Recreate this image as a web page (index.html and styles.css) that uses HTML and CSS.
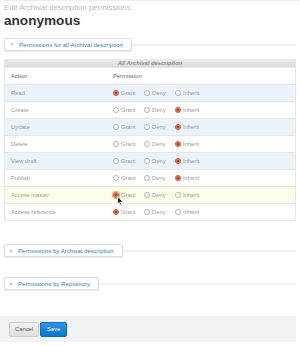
FILE: index.html
```html
<!DOCTYPE html>
<html>
<head>
  <title>Edit Archival description permissions</title>
  <link rel="stylesheet" href="styles.css">
</head>
<body>

  <div class="topline"></div>

  <div class="page">
    <p class="crumb">Edit Archival description permissions</p>
    <h1 class="name">anonymous</h1>

    <section class="fs">
      <div class="legend-row">
        <span class="legend"><i class="tri down"></i>Permissions for all Archival description</span>
      </div>

      <table class="perms">
        <tr class="caption"><td colspan="2">All Archival description</td></tr>
        <tr class="head"><th>Action</th><th>Permission</th></tr>
        <tr class="odd"><td>Read</td><td><span class="opt"><i class="radio on"></i>Grant</span><span class="opt"><i class="radio"></i>Deny</span><span class="opt"><i class="radio"></i>Inherit</span></td></tr>
        <tr><td>Create</td><td><span class="opt"><i class="radio"></i>Grant</span><span class="opt"><i class="radio"></i>Deny</span><span class="opt"><i class="radio on"></i>Inherit</span></td></tr>
        <tr class="odd"><td>Update</td><td><span class="opt"><i class="radio"></i>Grant</span><span class="opt"><i class="radio"></i>Deny</span><span class="opt"><i class="radio on"></i>Inherit</span></td></tr>
        <tr><td>Delete</td><td><span class="opt"><i class="radio"></i>Grant</span><span class="opt"><i class="radio"></i>Deny</span><span class="opt"><i class="radio on"></i>Inherit</span></td></tr>
        <tr class="odd"><td>View draft</td><td><span class="opt"><i class="radio"></i>Grant</span><span class="opt"><i class="radio"></i>Deny</span><span class="opt"><i class="radio on"></i>Inherit</span></td></tr>
        <tr><td>Publish</td><td><span class="opt"><i class="radio"></i>Grant</span><span class="opt"><i class="radio"></i>Deny</span><span class="opt"><i class="radio on"></i>Inherit</span></td></tr>
        <tr class="hover"><td>Access master</td><td><span class="opt"><i class="radio on focus"></i>Grant</span><span class="opt"><i class="radio"></i>Deny</span><span class="opt"><i class="radio"></i>Inherit</span>
          <svg class="cursor" width="7" height="10" viewBox="0 0 7 10"><path d="M0.5 0.5 L0.5 8 L2.3 6.4 L3.6 9.4 L4.8 8.9 L3.6 6 L6 6 Z" fill="#111" stroke="#fff" stroke-width="0.8"/></svg>
        </td></tr>
        <tr><td>Access reference</td><td><span class="opt"><i class="radio on"></i>Grant</span><span class="opt"><i class="radio"></i>Deny</span><span class="opt"><i class="radio"></i>Inherit</span></td></tr>
      </table>
    </section>

    <section class="fs closed">
      <div class="legend-row">
        <span class="legend"><i class="tri"></i>Permissions by Archival description</span>
      </div>
    </section>

    <section class="fs closed">
      <div class="legend-row">
        <span class="legend"><i class="tri"></i>Permissions by Repository</span>
      </div>
    </section>
  </div>

  <div class="actions">
    <button class="btn">Cancel</button>
    <button class="btn save">Save</button>
  </div>

</body>
</html>
```

FILE: styles.css
```css
body {
  margin: 0;
  font-family: "Liberation Sans", Arial, sans-serif;
  background: #fff;
  width: 300px;
  height: 346px;
  overflow: hidden;
}

.topline {
  height: 1px;
  background: #eee;
}

.page {
  width: 292px;
  padding-left: 4px;
}

.crumb {
  margin: 2px 0 0;
  font-size: 7.8px;
  line-height: 9px;
  color: #b9b9b9;
}

.name {
  margin: 1px 0 0;
  font-size: 13.6px;
  line-height: 16px;
  font-weight: bold;
  color: #333;
}

.fs {
  margin-top: 9px;
}

.legend-row {
  display: flex;
  align-items: center;
}

.legend-row::after {
  content: "";
  flex: 1;
  height: 2px;
  background: #f1f1f1;
}

.legend {
  display: inline-flex;
  align-items: center;
  height: 11px;
  padding: 0 8px 0 5px;
  border: 1px solid #dcdcdc;
  border-radius: 2px;
  box-shadow: 0 1px 1px rgba(0, 0, 0, 0.08);
  font-size: 6.1px;
  color: #2a7fd0;
  background: #fff;
}

.tri {
  width: 0;
  height: 0;
  margin-right: 5px;
  border-top: 2px solid transparent;
  border-bottom: 2px solid transparent;
  border-left: 3px solid #ccc;
}

.tri.down {
  border-left: 2px solid transparent;
  border-right: 2px solid transparent;
  border-top: 3px solid #ccc;
  border-bottom: 0;
}

.perms {
  margin-top: 8px;
  width: 292px;
  border-collapse: collapse;
  font-size: 5.8px;
  color: #9a9a9a;
}

.perms td,
.perms th {
  height: 16px;
  padding: 0 0 0 6px;
  border: 1px solid #e6e6e6;
  border-left: 0;
  border-right: 0;
  text-align: left;
}

.perms tr td:first-child,
.perms tr th:first-child {
  width: 96px;
}

.perms tr {
  border-left: 1px solid #e6e6e6;
  border-right: 1px solid #e6e6e6;
}

.caption td {
  height: 8px;
  padding: 0;
  text-align: center;
  font-style: italic;
  font-weight: bold;
  color: #8a8a8a;
  background: linear-gradient(#ececec, #dadada);
  border: 0;
}

.head th {
  font-weight: normal;
  color: #666;
  background: #fff;
}

.odd td {
  background: #eaf2fa;
}

.hover td {
  background: #fcfde8;
}

.opt {
  display: inline-flex;
  align-items: center;
  width: 31px;
}

.radio {
  width: 4px;
  height: 4px;
  margin-right: 2px;
  border: 0.6px solid #b5b5b5;
  border-radius: 50%;
  background: #fff;
}

.radio.on {
  border-color: #d65a2e;
  background: radial-gradient(circle, #a84020 0 0.7px, #ee7447 1.2px);
}

.radio.focus {
  box-shadow: 0 0 0 1px #f3a080;
}

.hover td:last-child {
  position: relative;
}

.cursor {
  position: absolute;
  left: 10px;
  top: 9px;
}

.closed {
  margin-top: 23px;
}

.closed + .closed {
  margin-top: 20px;
}

.actions {
  margin-top: 26px;
  width: 287px;
  height: 26px;
  padding-left: 9px;
  display: flex;
  align-items: center;
  gap: 1px;
  background: #f3f3f3;
}

.btn {
  height: 15px;
  padding: 0 5px;
  border: 1px solid #cfcfcf;
  border-radius: 2px;
  background: linear-gradient(#f2f2f2, #dedede);
  color: #555;
  font-family: "Liberation Sans", Arial, sans-serif;
  font-size: 5.8px;
}

.btn.save {
  width: 27px;
  border-color: #0a6ec4;
  background: linear-gradient(#2c96ea, #0874d2);
  color: #fff;
}
```
